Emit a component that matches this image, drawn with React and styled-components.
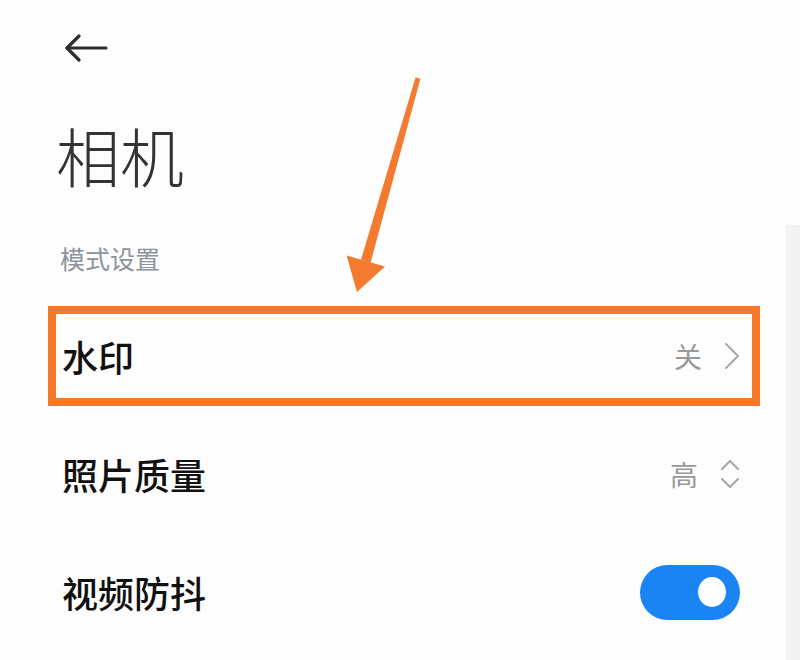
import React, { useState } from 'react'
import styled, { createGlobalStyle } from 'styled-components'

const GlobalStyle = createGlobalStyle`
    html, body {
        margin: 0;
        padding: 0;
        background: #fdfdfd;
    }
    body {
        font-family: "Noto Sans CJK SC", "Noto Sans", sans-serif;
    }
`;

const Page = styled.div`
    position: relative;
    width: 800px;
    height: 660px;
    overflow: hidden;
    padding-top: 28px;
    box-sizing: border-box;
    background: #fdfdfd;
`;

const ScrollTrack = styled.div`
    position: absolute;
    right: 0;
    top: 225px;
    bottom: 0;
    width: 14px;
    background: #f3f3f3;
`;

const Header = styled.div`
    height: 40px;
    padding-left: 64px;
    display: flex;
    align-items: center;
`;

const BackButton = styled.button`
    border: none;
    background: none;
    padding: 0;
    cursor: pointer;
    display: flex;
`;

const Title = styled.h1`
    margin: 54px 0 0 56px;
    font-size: 64px;
    line-height: 1;
    font-weight: 300;
    color: #333333;
`;

const SectionLabel = styled.div`
    margin: 60px 0 0 60px;
    font-size: 25px;
    line-height: 1;
    color: #8d929b;
`;

const List = styled.div`
    margin: 35px 0 0 48px;
    width: 712px;
    display: flex;
    flex-direction: column;
    gap: 18px;
`;

const Row = styled.div`
    height: 100px;
    box-sizing: border-box;
    border: 8px solid ${p => (p.$highlight ? '#f5792b' : 'transparent')};
    padding: 0 12px 0 6px;
    display: flex;
    align-items: center;
    justify-content: space-between;
`;

const Label = styled.span`
    font-size: 36px;
    font-weight: 500;
    color: #111111;
`;

const Value = styled.div`
    display: flex;
    align-items: center;
    gap: 22px;
    font-size: 28px;
    color: #9a9a9a;
`;

const Toggle = styled.button`
    width: 100px;
    height: 55px;
    border: none;
    border-radius: 28px;
    background: ${p => (p.$on ? '#1a84f5' : '#d5d5d5')};
    padding: 0 14px;
    display: flex;
    align-items: center;
    justify-content: ${p => (p.$on ? 'flex-end' : 'flex-start')};
    cursor: pointer;
`;

const Knob = styled.span`
    width: 28px;
    height: 30px;
    border-radius: 50%;
    background: #ffffff;
`;

const Pointer = styled.svg`
    position: absolute;
    left: 0;
    top: 0;
    pointer-events: none;
`;

const BackArrow = () => (
    <svg width="44" height="30" viewBox="0 0 44 30" fill="none" stroke="#2e2e2e" strokeWidth="3.2" strokeLinecap="round" strokeLinejoin="round">
        <path d="M3 15 H42" />
        <path d="M15 3 L3 15 L15 27" />
    </svg>
)

const ChevronRight = () => (
    <svg width="16" height="28" viewBox="0 0 16 28" fill="none" stroke="#a9a9a9" strokeWidth="2" strokeLinecap="round" strokeLinejoin="round">
        <path d="M2 2 L14 14 L2 26" />
    </svg>
)

const ChevronUpDown = () => (
    <svg width="20" height="32" viewBox="0 0 20 32" fill="none" stroke="#a9a9a9" strokeWidth="2.2" strokeLinecap="round" strokeLinejoin="round">
        <path d="M2 11 L10 3 L18 11" />
        <path d="M2 21 L10 29 L18 21" />
    </svg>
)

const App = () => {
    const [stabilize, setStabilize] = useState(true)

    return (
        <Page>
            <GlobalStyle />
            <ScrollTrack />
            <Header>
                <BackButton aria-label="返回"><BackArrow /></BackButton>
            </Header>
            <Title>相机</Title>
            <SectionLabel>模式设置</SectionLabel>
            <List>
                <Row $highlight>
                    <Label>水印</Label>
                    <Value>关<ChevronRight /></Value>
                </Row>
                <Row>
                    <Label>照片质量</Label>
                    <Value>高<ChevronUpDown /></Value>
                </Row>
                <Row>
                    <Label>视频防抖</Label>
                    <Toggle $on={stabilize} onClick={() => setStabilize(!stabilize)}>
                        <Knob />
                    </Toggle>
                </Row>
            </List>
            <Pointer width="800" height="660" viewBox="0 0 800 660">
                <polygon points="420.4,78.7 415.6,77.3 361,259.6 370.6,262.4" fill="#f47a2f" />
                <polygon points="385,266.5 346.6,255.5 357,292" fill="#f47a2f" />
            </Pointer>
        </Page>
    )
}

export default App
